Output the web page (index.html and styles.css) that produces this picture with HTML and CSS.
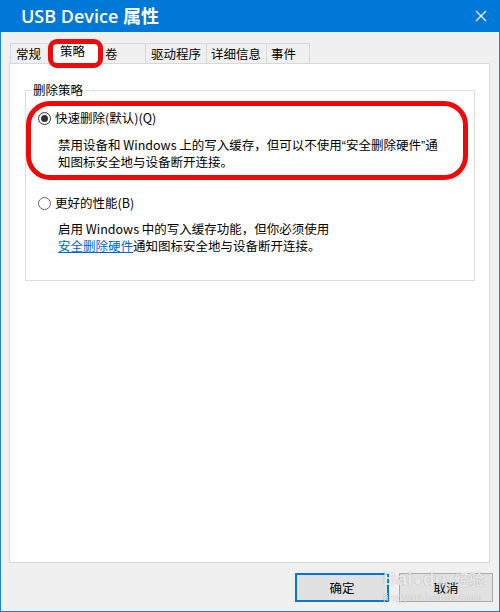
FILE: index.html
```html
<!DOCTYPE html>
<html lang="zh-CN">
<head>
    <meta charset="UTF-8">
    <meta name="viewport" content="width=device-width, initial-scale=1.0">
    <title>USB Device 属性</title>
    <link rel="stylesheet" href="styles.css">
</head>
<body>

    <div class="window">
        <div class="titlebar">
            <span class="title">USB Device 属性</span>
            <svg class="close" width="12" height="12" viewBox="0 0 12 12">
                <path d="M1 1 L11 11 M11 1 L1 11" stroke="#fff" stroke-width="1.2" fill="none"/>
            </svg>
        </div>

        <div class="frame">
            <ul class="tabs">
                <li class="tab tab-general">常规</li>
                <li class="tab tab-policy active">策略<span class="mark mark-tab"></span></li>
                <li class="tab tab-volume">卷</li>
                <li class="tab tab-driver">驱动程序</li>
                <li class="tab tab-details">详细信息</li>
                <li class="tab tab-events">事件</li>
            </ul>

            <div class="panel">
                <fieldset class="group">
                    <legend>删除策略</legend>

                    <div class="option option-quick">
                        <div class="radio-row"><span class="radio checked"></span>快速删除(默认)(Q)</div>
                        <p class="desc">禁用设备和 Windows 上的写入缓存，但可以不使用<span class="q">“</span>安全删除硬件<span class="q">”</span>通<br>知图标安全地与设备断开连接。</p>
                        <span class="mark mark-option"></span>
                    </div>

                    <div class="option option-perf">
                        <div class="radio-row"><span class="radio"></span>更好的性能(B)</div>
                        <p class="desc">启用 Windows 中的写入缓存功能，但你必须使用<br><a href="#">安全删除硬件</a>通知图标安全地与设备断开连接。</p>
                    </div>
                </fieldset>
            </div>

            <div class="buttons">
                <button class="btn btn-default">确定</button>
                <button class="btn">取消</button>
            </div>
        </div>

        <!-- site watermark baked into the screenshot -->
        <div class="watermark">
            <div class="wm-logo"><span class="wm-bai">Bai</span><span class="wm-paw">●</span><span class="wm-du">du</span><span class="wm-jy">经验</span></div>
            <div class="wm-url">jingyan.baidu.com</div>
        </div>
    </div>

</body>
</html>
```

FILE: styles.css
```css
body {
    margin: 0;
    padding: 0;
    font-family: "Noto Sans CJK SC", "Microsoft YaHei", sans-serif;
    font-size: 12.5px;
    color: #000;
    background: #f0f0f0;
}

.window {
    position: relative;
    width: 500px;
    height: 612px;
    background: #f0f0f0;
}

.titlebar {
    height: 32px;
    background: #0078d7;
    display: flex;
    align-items: center;
    justify-content: space-between;
    padding: 0 13px 0 21px;
    box-sizing: border-box;
}

.titlebar .title {
    color: #fff;
    font-family: "Open Sans", "Noto Sans CJK SC", sans-serif;
    font-size: 18px;
    font-weight: 600;
    line-height: 32px;
}

.frame {
    height: 580px;
    box-sizing: border-box;
    border: 1px solid #1883d7;
    border-top: none;
    padding: 8px 8px 0 8px;
}

/* tab strip */
.tabs {
    display: flex;
    align-items: flex-end;
    height: 23px;
    margin: 0 0 0 1px;
    padding: 0;
    list-style: none;
}

.tab {
    box-sizing: border-box;
    height: 20px;
    line-height: 19px;
    border: 1px solid #d9d9d9;
    border-bottom: none;
    background: #f0f0f0;
    padding-left: 4px;
    margin-left: -1px;
    white-space: nowrap;
}

.tab-general { width: 42px; margin-left: 0; padding-left: 5px; }
.tab-volume { width: 50px; padding-left: 8px; }
.tab-driver { width: 62px; padding-left: 5px; }
.tab-details { width: 61px; }
.tab-events { width: 44px; }

.tab.active {
    position: relative;
    z-index: 2;
    width: 49px;
    height: 24px;
    line-height: 20px;
    margin: 0 -2px -1px -2px;
    padding-left: 9px;
    background: #fff;
}

.panel {
    position: relative;
    z-index: 1;
    width: 481px;
    height: 500px;
    box-sizing: border-box;
    border: 1px solid #d9d9d9;
    background: #fff;
    padding-top: 18px;
}

.group {
    width: 450px;
    height: 199px;
    box-sizing: border-box;
    margin: 0 0 0 15px;
    padding: 0;
    border: 1px solid #dcdcdc;
}

.group legend {
    margin-left: 5px;
    padding: 0 2px;
    line-height: 16px;
}

.option {
    position: relative;
}

.radio-row {
    display: flex;
    align-items: center;
    line-height: 16px;
    padding-left: 12px;
}

.option-quick .radio-row { margin-top: 12px; }
.option-perf .radio-row { margin-top: 25px; }

.radio {
    width: 13px;
    height: 13px;
    box-sizing: border-box;
    border: 1px solid #333;
    border-radius: 50%;
    background: #fff;
    margin-right: 4px;
    display: flex;
    align-items: center;
    justify-content: center;
}

.option-perf .radio {
    border-color: #666;
}

.radio.checked::after {
    content: "";
    width: 7px;
    height: 7px;
    border-radius: 50%;
    background: #333;
}

.desc {
    margin: 11px 0 0 0;
    padding-left: 32px;
    line-height: 16px;
}

.desc .q {
    font-family: "Liberation Sans", Arial, sans-serif;
}

.option-perf .desc { margin-top: 9px; line-height: 17px; }

.desc a {
    color: #0066cc;
    text-decoration: underline;
}

/* red annotation boxes */
.mark {
    position: absolute;
    box-sizing: border-box;
    border: 5px solid #ee0a0a;
    pointer-events: none;
}

.mark-tab {
    left: -3px;
    top: -2px;
    width: 55px;
    height: 29px;
    border-radius: 9px;
}

.mark-option {
    left: 0;
    top: -9px;
    width: 442px;
    height: 79px;
    border-radius: 24px;
}

/* dialog buttons */
.buttons {
    display: flex;
    justify-content: flex-end;
    gap: 10px;
    margin: 10px -2px 0 0;
}

.btn {
    width: 94px;
    height: 29px;
    box-sizing: border-box;
    border: 1px solid #adadad;
    background: #e1e1e1;
    font-family: inherit;
    font-size: 12.5px;
    color: #000;
    padding: 0;
}

.btn-default {
    border: 2px solid #0078d7;
}

.watermark {
    position: absolute;
    left: 383px;
    top: 568px;
    color: rgba(255, 255, 255, 0.8);
    text-shadow: 0 0 1px rgba(0, 0, 0, 0.35);
    pointer-events: none;
}

.wm-logo {
    display: flex;
    align-items: baseline;
    font-family: "Liberation Sans", Arial, sans-serif;
    font-weight: bold;
    line-height: 22px;
}

.wm-bai, .wm-du { font-size: 19px; }
.wm-paw { font-size: 14px; margin: 0 1px; }
.wm-jy { font-size: 15px; margin-left: 8px; font-family: "Noto Sans CJK SC", sans-serif; }

.wm-url {
    font-family: "Liberation Sans", Arial, sans-serif;
    font-size: 11px;
    line-height: 11px;
    letter-spacing: 0.6px;
    margin-top: 1px;
}
```
